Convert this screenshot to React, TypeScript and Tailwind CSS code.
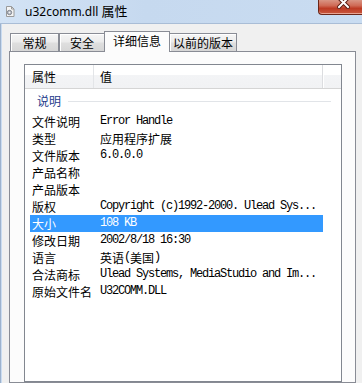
import React from "react";

const cjk = "font-['Noto_Sans_CJK_SC',sans-serif]";
const mono = "font-['Liberation_Mono','Noto_Sans_CJK_SC',monospace] text-[12px] tracking-[-1.2px]";

type Row = { k: string; v: React.ReactNode; sel?: boolean };

const M = ({ children }: { children: React.ReactNode }) => (
  <span className={mono + " whitespace-pre"}>{children}</span>
);
const C = ({ children }: { children: React.ReactNode }) => (
  <span className={cjk + " text-[12px]"}>{children}</span>
);

const rows: Row[] = [
  { k: "文件说明", v: <M>Error Handle</M> },
  { k: "类型", v: <C>应用程序扩展</C> },
  { k: "文件版本", v: <M>6.0.0.0</M> },
  { k: "产品名称", v: null },
  { k: "产品版本", v: null },
  { k: "版权", v: <M>Copyright (c)1992-2000. Ulead Sys...</M> },
  { k: "大小", v: <M>108 KB</M>, sel: true },
  { k: "修改日期", v: <M>2002/8/18 16:30</M> },
  {
    k: "语言",
    v: (
      <>
        <C>英语</C>
        <M>(</M>
        <C>美国</C>
        <M>)</M>
      </>
    ),
  },
  { k: "合法商标", v: <M>Ulead Systems, MediaStudio and Im...</M> },
  { k: "原始文件名", v: <M>U32COMM.DLL</M> },
];

function FileIcon() {
  return (
    <svg width="10" height="11" viewBox="0 0 10 11">
      <path d="M1.5 0.5 H6.5 L9 3 V10.5 H1.5 Z" fill="#f4f4f4" stroke="#9a9a9a" />
      <path d="M6.5 0.5 V3 H9" fill="none" stroke="#9a9a9a" />
      <circle cx="4.5" cy="6.5" r="2.2" fill="#b8bcc4" stroke="#6f7580" strokeWidth="0.8" />
      <circle cx="4.5" cy="6.5" r="0.8" fill="#f4f4f4" />
    </svg>
  );
}

function Tab({ label, w, sel }: { label: string; w: string; sel?: boolean }) {
  if (sel) {
    return (
      <div
        className={`${w} h-[21px] -mb-px -mx-px relative z-10 bg-[#fcfcfc] border border-b-0 border-[#898c95] flex justify-center pt-[1px] ${cjk} text-[12px] leading-[16px] text-black`}
      >
        {label}
      </div>
    );
  }
  return (
    <div
      className={`${w} h-[18px] border border-b-0 border-[#898c95] bg-[linear-gradient(to_bottom,#f6f6f6_0%,#ececec_45%,#dedede_55%,#d6d6d6_100%)] shadow-[inset_1px_1px_0_#ffffff] flex justify-center pt-[1px] ${cjk} text-[12px] leading-[16px] text-black`}
    >
      {label}
    </div>
  );
}

export default function App() {
  return (
    <div className="w-[362px] h-[383px] overflow-hidden bg-[#f0f0f0] flex flex-col relative">
      {/* title bar */}
      <div className="h-[24px] shrink-0 flex items-center pl-[5px] gap-[10px] border-b border-[#a9bdd6] bg-[linear-gradient(to_right,#d3e3f5_0%,#c6d9ef_40%,#c9dcf1_100%)]">
        <div className="pb-[1px]">
          <FileIcon />
        </div>
        <div className="font-['Noto_Sans','Noto_Sans_CJK_SC',sans-serif] text-[12px] text-black leading-none pb-[2px]">
          u32comm.dll <span className={cjk + " text-[13px]"}>属性</span>
        </div>
      </div>
      {/* close button */}
      <div className="absolute top-0 right-0 w-[44px] h-[15px] rounded-bl-[4px] border border-t-0 border-r-0 border-[#6b2618] bg-[linear-gradient(to_bottom,#d99584_0%,#cf6a55_40%,#bd3b24_60%,#c9583f_100%)] shadow-[inset_0_-1px_0_#e9a493]">
        <svg className="absolute left-[18px] top-[-3px]" width="13" height="12" viewBox="0 0 13 12">
          <path d="M2 1 L11 10 M11 1 L2 10" stroke="#5a1a10" strokeWidth="4" strokeLinecap="square" />
          <path d="M2 1 L11 10 M11 1 L2 10" stroke="#ffffff" strokeWidth="2" strokeLinecap="square" />
        </svg>
      </div>
      {/* body */}
      <div className="flex-1 flex flex-col border-l border-[#9db2cd] shadow-[inset_1px_0_0_#cadcf1] pl-[8px] pr-[6px] pt-[7px]">
        <div className="h-[20px] shrink-0 flex items-end pl-[1px]">
          <Tab label="常规" w="w-[49px]" />
          <Tab label="安全" w="w-[46px]" />
          <Tab label="详细信息" w="w-[66px]" sel />
          <Tab label="以前的版本" w="w-[68px]" />
        </div>
        <div className="flex-1 border border-[#898c95] bg-[#fcfcfc] pt-[12px] pl-[14px] pr-[13px] flex flex-col">
          <div className="flex-1 border border-[#828790] bg-white flex flex-col">
            {/* header */}
            <div className="h-[24px] shrink-0 flex border-b border-[#d5d5d5] bg-[linear-gradient(to_bottom,#ffffff_0%,#ffffff_42%,#f3f4f6_42%,#f1f2f4_100%)]">
              <div className={`w-[69px] border-r border-[#e3e5e8] pl-[7px] flex items-center ${cjk} text-[12px] text-black`}>
                属性
              </div>
              <div className={`w-[229px] border-r border-[#dcdde0] pl-[6px] flex items-center ${cjk} text-[12px] text-black`}>
                值
              </div>
              <div className="w-px bg-white" />
              <div className="flex-1" />
            </div>
            {/* group */}
            <div className="h-[24px] shrink-0 flex items-center pl-[12px] pr-[10px]">
              <span className={`${cjk} text-[12px] text-[#1e3c8c]`}>说明</span>
              <div className="flex-1 h-px bg-[#e1e4e8] ml-[7px]" />
            </div>
            {/* rows */}
            <div className="flex flex-col">
              {rows.map((r) => (
                <div
                  key={r.k}
                  className={`ml-[5px] w-[293px] h-[17px] flex items-center leading-[17px] ${
                    r.sel ? "bg-[#3399ff] text-white" : "text-black"
                  }`}
                >
                  <div className={`w-[70px] pl-[2px] shrink-0 ${cjk} text-[12px]`}>{r.k}</div>
                  <div className="flex-1 overflow-hidden whitespace-nowrap flex items-center">{r.v}</div>
                </div>
              ))}
            </div>
          </div>
        </div>
      </div>
    </div>
  );
}
